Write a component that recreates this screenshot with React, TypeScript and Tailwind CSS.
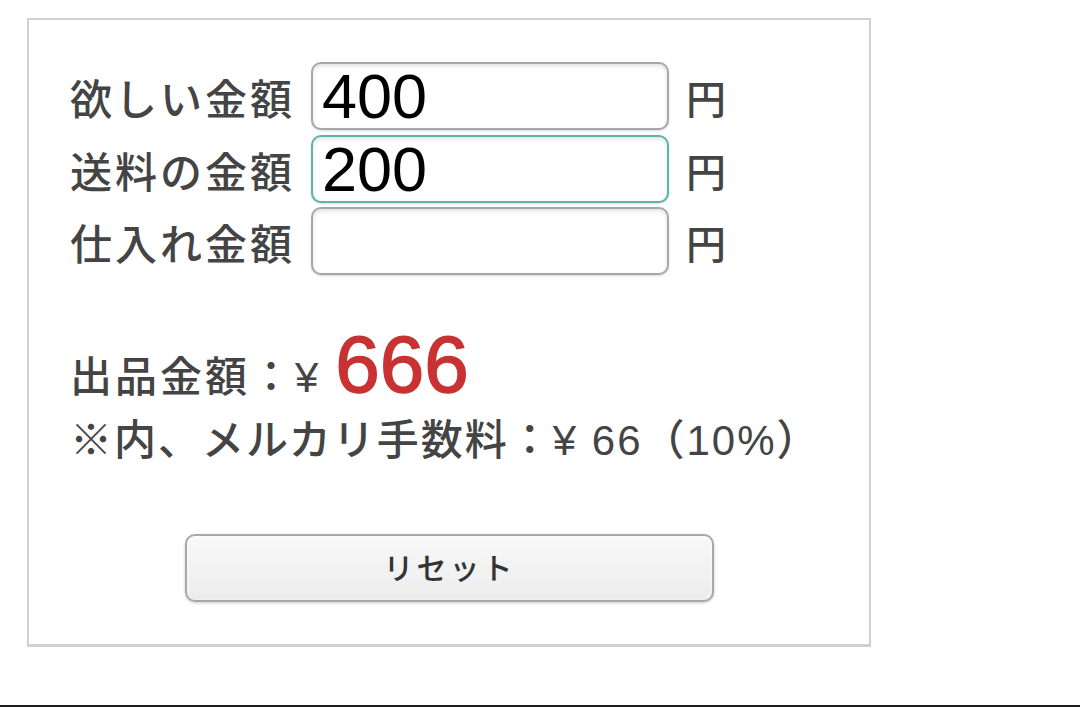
import React, { useState } from 'react';

const FONT = {
  fontFamily: '"Liberation Sans", "Noto Sans CJK JP", sans-serif',
};

interface RowProps {
  label: string;
  value: string;
  focused?: boolean;
  onChange: (v: string) => void;
}

const InputRow: React.FC<RowProps> = ({ label, value, focused, onChange }) => (
  <div className="flex items-center h-[68px]">
    <span className="w-[241px] shrink-0 text-[42px] tracking-[3px] font-medium text-[#444] leading-none mt-[10px]">
      {label}
    </span>
    <input
      value={value}
      onChange={(e) => onChange(e.target.value)}
      className={`w-[358px] h-[68px] shrink-0 rounded-[10px] border-2 bg-white px-[9px] text-[63px] leading-none text-black outline-none shadow-[inset_0_2px_4px_rgba(0,0,0,0.12),0_1px_2px_rgba(0,0,0,0.15)] ${
        focused ? 'border-[#5fb3a9]' : 'border-[#a8a8a8]'
      }`}
      style={FONT}
    />
    <span className="ml-[17px] text-[40px] font-medium text-[#444] leading-none mt-[8px]">円</span>
  </div>
);

export default function App() {
  const [want, setWant] = useState('400');
  const [ship, setShip] = useState('200');
  const [cost, setCost] = useState('');

  const total = (Number(want) || 0) + (Number(ship) || 0) + (Number(cost) || 0);
  const price = Math.floor(total / 0.9);
  const fee = Math.floor(price * 0.1);

  return (
    <div className="h-[707px] flex flex-col bg-white" style={FONT}>
      <div className="flex-1">
        <div className="ml-[27px] mt-[18px] w-[844px] h-[629px] border-2 border-[#d0d0d0] border-b-[3px] pl-[41px] pt-[42px]">
          <div className="flex flex-col gap-[4.5px]">
            <InputRow label="欲しい金額" value={want} onChange={setWant} />
            <InputRow label="送料の金額" value={ship} focused onChange={setShip} />
            <InputRow label="仕入れ金額" value={cost} onChange={setCost} />
          </div>

          <div className="mt-[50px] flex items-baseline text-[#444]">
            <span className="text-[42px] tracking-[3px] font-medium leading-none">出品金額：¥</span>
            <span className="ml-[14px] text-[80px] leading-none text-[#c83232] [-webkit-text-stroke:1.5px_#c83232]">
              {price}
            </span>
          </div>
          <div className="mt-[15px] text-[42px] tracking-[2px] font-medium leading-none text-[#444]">
            ※内、メルカリ手数料：¥ {fee}（10%）
          </div>

          <div className="mt-[72px] pl-[115px]">
            <button
              onClick={() => {
                setWant('');
                setShip('');
                setCost('');
              }}
              className="w-[529px] h-[68px] rounded-[10px] border-2 border-[#a8a8a8] bg-gradient-to-b from-[#f8f8f8] to-[#ececec] text-[30px] tracking-[3px] font-medium text-[#333] shadow-[inset_0_2px_4px_rgba(255,255,255,0.8),0_1px_3px_rgba(0,0,0,0.2)]"
            >
              リセット
            </button>
          </div>
        </div>
      </div>
      <div className="h-[2px] bg-[#1e1e1e]" />
    </div>
  );
}
